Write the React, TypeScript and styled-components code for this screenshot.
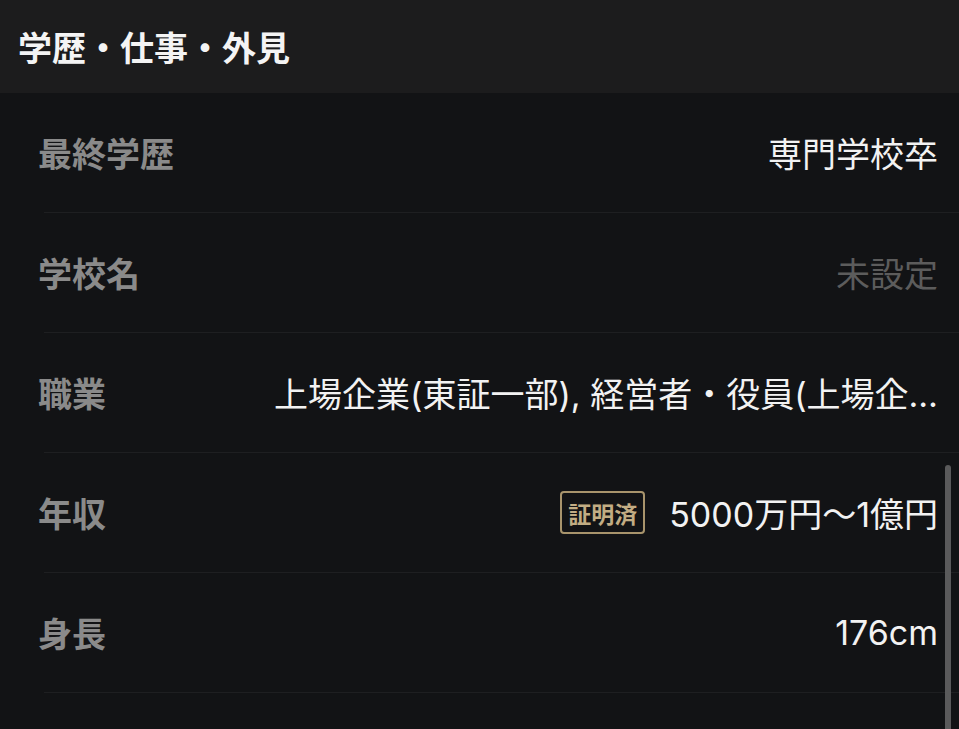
import React from "react";
import styled, { createGlobalStyle } from "styled-components";

const GlobalStyle = createGlobalStyle`
  html, body {
    margin: 0;
    padding: 0;
    background-color: #121315;
    font-family: "Inter", "Noto Sans CJK JP", sans-serif;
  }
`;

const Page = styled.div`
  position: relative;
  width: 959px;
  height: 729px;
  overflow: hidden;
  background-color: #121315;
`;

const Header = styled.div`
  height: 93px;
  display: flex;
  align-items: center;
  padding-left: 18px;
  background-color: #1c1c1d;
`;

const Title = styled.h2`
  margin: 0;
  font-size: 34px;
  font-weight: 700;
  color: #f4f4f4;
`;

const List = styled.div`
  display: flex;
  flex-direction: column;
`;

const Row = styled.div`
  height: 119px;
  display: flex;
  align-items: center;
  justify-content: space-between;
  gap: 40px;
  padding: 0 21px 0 38px;
`;

const Divider = styled.div`
  height: 1px;
  margin-left: 44px;
  background-color: #1e1f21;
`;

const Label = styled.span`
  flex-shrink: 0;
  font-size: 34px;
  font-weight: 700;
  color: #8a8a8a;
`;

const ValueWrap = styled.div`
  flex: 1;
  min-width: 0;
  display: flex;
  align-items: center;
  justify-content: flex-end;
  gap: 24px;
`;

const Value = styled.span<{ $muted?: boolean }>`
  font-size: 34px;
  font-weight: 400;
  color: ${(p) => (p.$muted ? "#5c5c5c" : "#f2f2f2")};
  white-space: nowrap;
`;

const Badge = styled.span`
  flex-shrink: 0;
  box-sizing: border-box;
  height: 43px;
  padding: 0 6px;
  display: flex;
  align-items: center;
  border: 2px solid #a8946c;
  border-radius: 4px;
  font-family: "Noto Sans CJK JP", sans-serif;
  font-size: 23px;
  font-weight: 700;
  color: #c2ad84;
`;

const Scrollbar = styled.div`
  position: absolute;
  left: 945px;
  top: 465px;
  width: 6px;
  height: 280px;
  border-radius: 3px;
  background-color: #5a5a5b;
`;

type Item = {
  label: string;
  value: string;
  muted?: boolean;
  verified?: boolean;
};

const items: Item[] = [
  { label: "最終学歴", value: "専門学校卒" },
  { label: "学校名", value: "未設定", muted: true },
  { label: "職業", value: "上場企業(東証一部), 経営者・役員(上場企…" },
  { label: "年収", value: "5000万円〜1億円", verified: true },
  { label: "身長", value: "176cm" },
];

export default function App() {
  return (
    <Page>
      <GlobalStyle />
      <Header>
        <Title>学歴・仕事・外見</Title>
      </Header>
      <List>
        {items.map((item) => (
          <React.Fragment key={item.label}>
            <Row>
              <Label>{item.label}</Label>
              <ValueWrap>
                {item.verified && <Badge>証明済</Badge>}
                <Value $muted={item.muted}>{item.value}</Value>
              </ValueWrap>
            </Row>
            <Divider />
          </React.Fragment>
        ))}
      </List>
      <Scrollbar />
    </Page>
  );
}
